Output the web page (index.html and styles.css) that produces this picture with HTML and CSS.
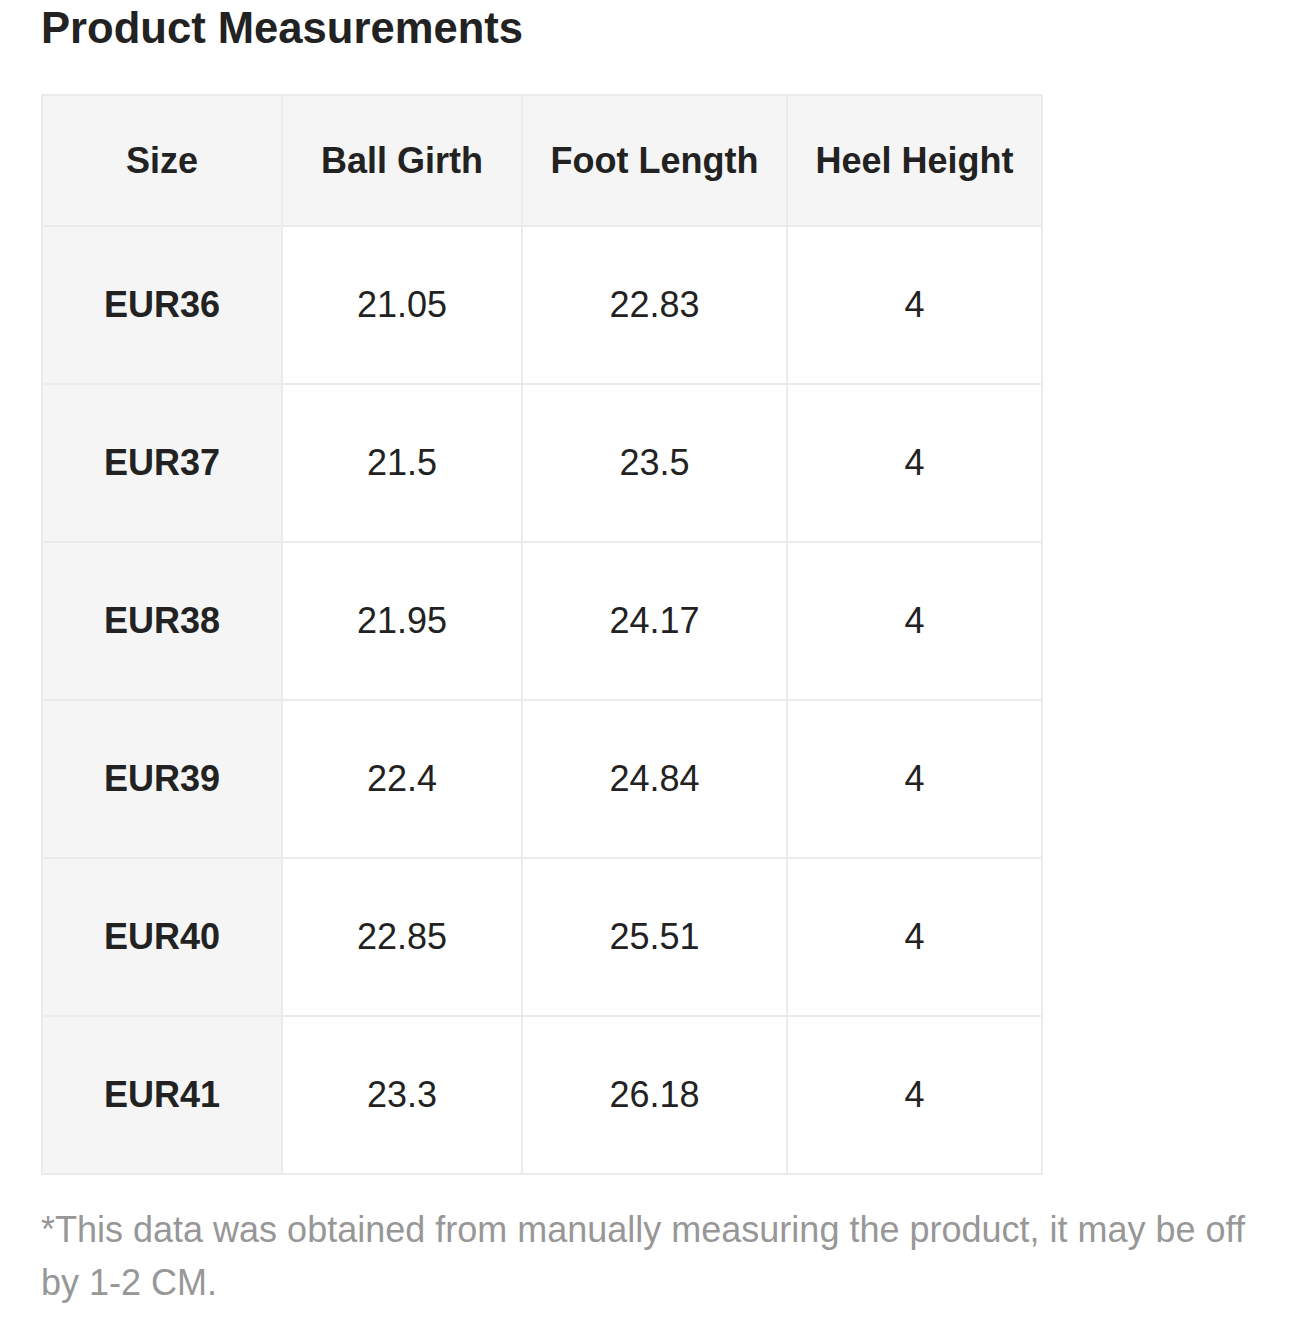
FILE: index.html
```html
<!DOCTYPE html>
<html lang="en">
<head>
<meta charset="utf-8">
<title>Product Measurements</title>
<link rel="stylesheet" href="styles.css">
</head>
<body>
<main class="page">
  <h1 class="title">Product Measurements</h1>
  <table class="measure">
    <colgroup>
      <col class="c1"><col class="c2"><col class="c3"><col class="c4">
    </colgroup>
    <thead>
      <tr><th>Size</th><th>Ball Girth</th><th>Foot Length</th><th>Heel Height</th></tr>
    </thead>
    <tbody>
      <tr><th>EUR36</th><td>21.05</td><td>22.83</td><td>4</td></tr>
      <tr><th>EUR37</th><td>21.5</td><td>23.5</td><td>4</td></tr>
      <tr><th>EUR38</th><td>21.95</td><td>24.17</td><td>4</td></tr>
      <tr><th>EUR39</th><td>22.4</td><td>24.84</td><td>4</td></tr>
      <tr><th>EUR40</th><td>22.85</td><td>25.51</td><td>4</td></tr>
      <tr><th>EUR41</th><td>23.3</td><td>26.18</td><td>4</td></tr>
    </tbody>
  </table>
  <p class="note">*This data was obtained from manually measuring the product, it may be off by 1-2 CM.</p>
</main>
</body>
</html>
```

FILE: styles.css
```css
html, body {
  margin: 0;
  padding: 0;
  background: #ffffff;
}
body {
  font-family: "Liberation Sans", Arial, sans-serif;
  color: #222222;
}
.page {
  padding: 0 40px 0 41px;
}
.title {
  margin: 2px 0 0;
  font-size: 43.6px;
  line-height: 52px;
  font-weight: bold;
  color: #222222;
}
.measure {
  margin-top: 40px;
  border-collapse: collapse;
  table-layout: fixed;
  width: 1000px;
}
.c1 { width: 240px; }
.c2 { width: 240px; }
.c3 { width: 265px; }
.c4 { width: 255px; }
.measure th,
.measure td {
  border: 2px solid #ebebeb;
  padding: 0;
  text-align: center;
  vertical-align: middle;
  font-size: 36px;
}
.measure thead th {
  height: 129px;
  background: #f5f5f5;
  font-weight: bold;
}
.measure tbody th {
  background: #f5f5f5;
  font-weight: bold;
}
.measure tbody th,
.measure tbody td {
  height: 156px;
}
.measure td {
  font-weight: normal;
  background: #ffffff;
}
.note {
  margin: 28px 0 0;
  font-size: 36px;
  line-height: 53px;
  color: #979797;
}
```
